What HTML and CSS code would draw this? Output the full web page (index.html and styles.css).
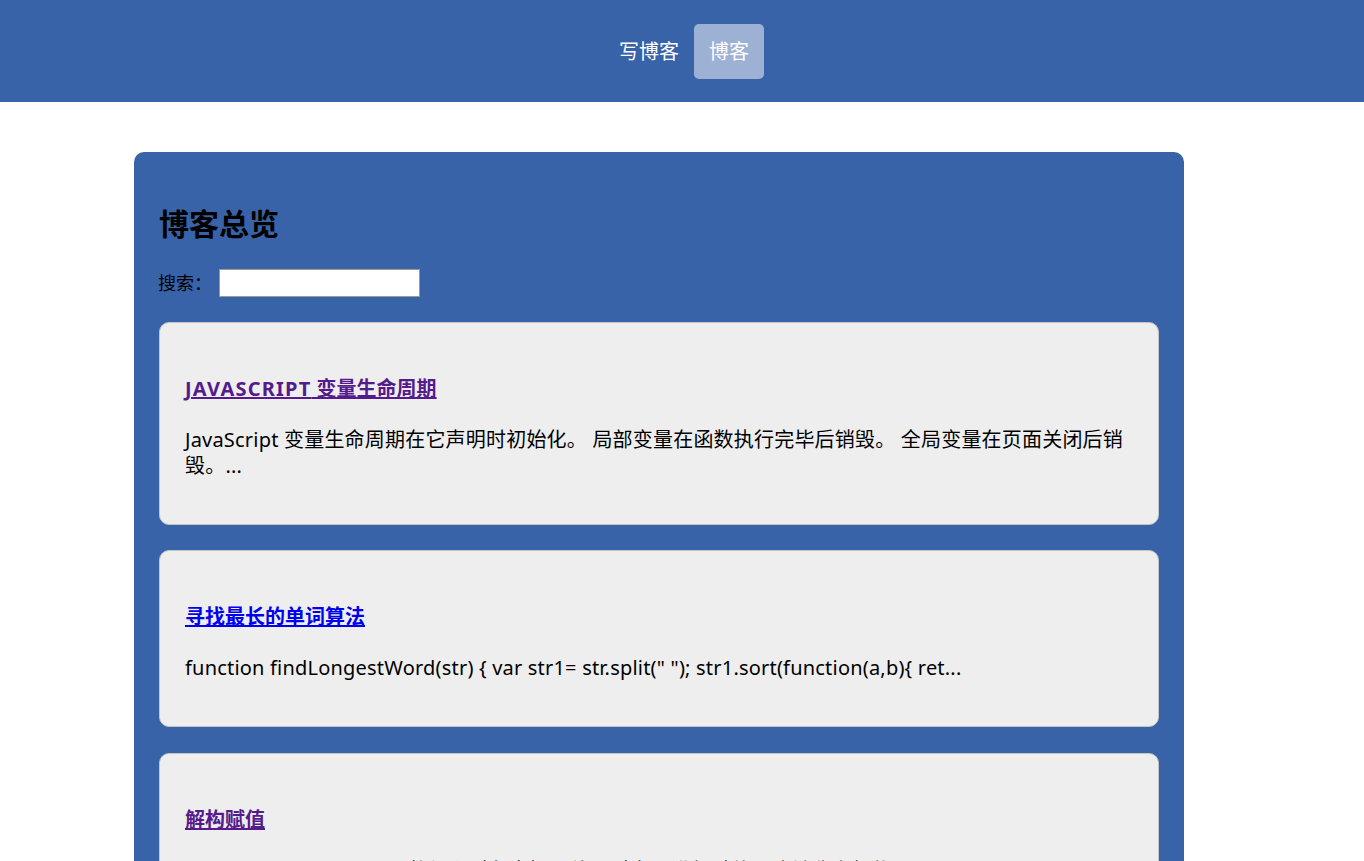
FILE: index.html
```html
<!DOCTYPE html>
<html lang="zh-CN">
<head>
<meta charset="utf-8">
<title>博客总览</title>
<link rel="stylesheet" href="styles.css">
</head>
<body>
<header class="topbar">
  <nav class="nav">
    <a class="nav-item" href="#">写博客</a>
    <a class="nav-item active" href="#">博客</a>
  </nav>
</header>
<main class="panel">
  <h1 class="panel-title">博客总览</h1>
  <div class="search">
    <label class="search-label" for="q">搜索：</label>
    <input class="search-input" id="q" type="text">
  </div>
  <article class="card">
    <h3 class="card-title upper"><a class="visited" href="#"><span class="latin">JavaScript</span> 变量生命周期</a></h3>
    <p class="card-text">JavaScript 变量生命周期在它声明时初始化。 局部变量在函数执行完毕后销毁。 全局变量在页面关闭后销毁。...</p>
  </article>
  <article class="card">
    <h3 class="card-title"><a class="link" href="#">寻找最长的单词算法</a></h3>
    <p class="card-text">function findLongestWord(str) { var str1= str.split(" "); str1.sort(function(a,b){ ret...</p>
  </article>
  <article class="card">
    <h3 class="card-title"><a class="visited" href="#">解构赋值</a></h3>
    <p class="card-text">let [a, b, c] = [1, 2, 3]; 从数组和对象中提取值，对变量进行赋值，这被称为解构。...</p>
  </article>
</main>
</body>
</html>
```
FILE: styles.css
```css
html, body {
  margin: 0;
  padding: 0;
  background: #ffffff;
  font-family: "Noto Sans", "Noto Sans CJK SC", sans-serif;
  color: #000;
}

.topbar {
  background: #3863a8;
  height: 102px;
  display: flex;
  justify-content: center;
  align-items: center;
}

.nav {
  display: flex;
  padding-left: 4px;
}

.nav-item {
  display: block;
  color: #fff;
  text-decoration: none;
  font-size: 20px;
  line-height: 27px;
  padding: 14px 15px;
  border-radius: 5px;
}

.nav-item.active {
  background: rgba(255, 255, 255, 0.5);
}

.panel {
  width: 1000px;
  margin: 50px 0 0 134px;
  background: #3863a8;
  border-radius: 10px 10px 0 0;
  padding: 40px 25px 25px;
}

.panel-title {
  margin: 0;
  font-size: 30px;
  line-height: 64px;
  font-weight: bold;
}

.search {
  display: flex;
  align-items: center;
  margin-top: 13px;
}

.search-label {
  font-size: 18px;
  line-height: 28px;
  margin-left: -1px;
  margin-right: 7px;
}

.search-input {
  box-sizing: border-box;
  width: 201px;
  height: 28px;
  border: 1px solid #9a9a9a;
  padding: 1px 2px;
  margin: 0;
  background: #fff;
}

.card {
  background: #eeeeee;
  border: 1px solid #c4c4c4;
  border-radius: 10px;
  padding: 25px;
  margin-top: 25px;
}

.card + .card {
  margin-top: 26px;
}

.card:nth-of-type(2) {
  margin-top: 25px;
}

.card-title {
  margin: 27px 0 0;
  font-size: 20px;
  line-height: 27px;
  font-weight: bold;
}

.card-title.upper {
  text-transform: uppercase;
}

.latin {
  letter-spacing: 1.2px;
}

.card-title a {
  text-decoration: underline;
}

.visited {
  color: #551a8b;
}

.link {
  color: #0000ee;
}

.card-text {
  margin: 25px 0 20px;
  font-size: 20px;
  line-height: 26px;
  letter-spacing: 0.2px;
}
```
